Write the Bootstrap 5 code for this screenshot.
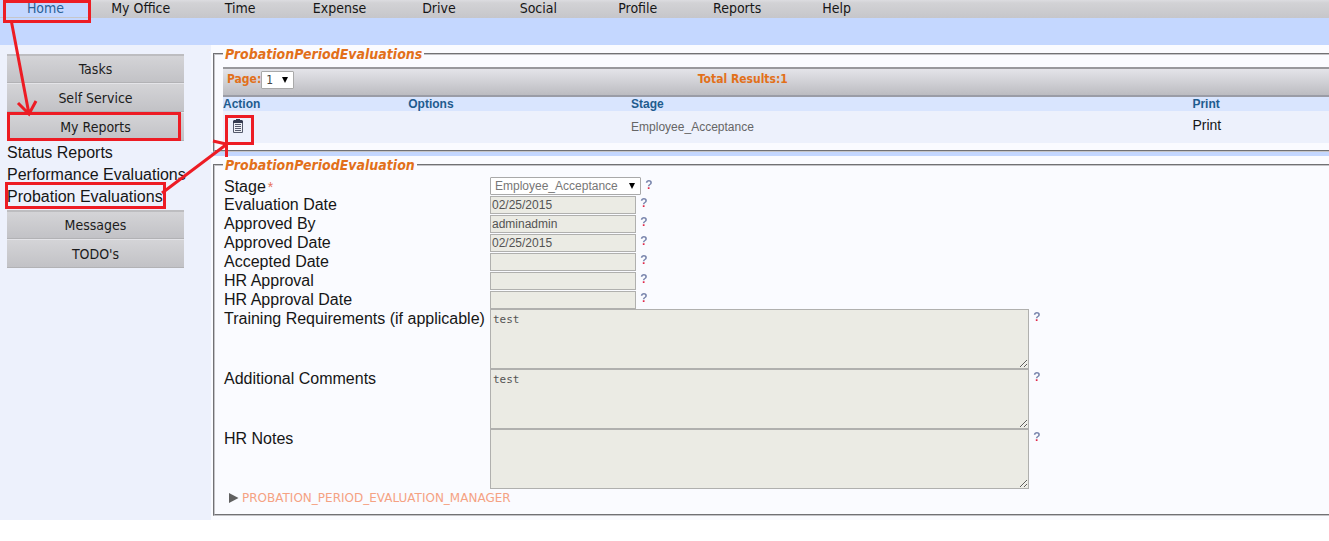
<!DOCTYPE html>
<html lang="en">
<head>
<meta charset="utf-8">
<meta name="viewport" content="width=device-width, initial-scale=1">
<title>Probation Evaluations</title>
<link href="https://cdn.jsdelivr.net/npm/bootstrap@5.3.0/dist/css/bootstrap.min.css" rel="stylesheet">
<style>
body{font-family:"Liberation Sans",Arial,sans-serif;font-size:16px;line-height:22px;color:#161616;background:#fff}
.ui-font{font-family:"DejaVu Sans Condensed",Tahoma,sans-serif}
a{color:inherit;text-decoration:none}
.topbar{height:18px;font-size:14px;line-height:17px;background:linear-gradient(#dcdce0 0,#d2d2d5 3px,#c6c6ca 18px)}
.topbar .nav-item{width:7.48%;text-align:center}
.topbar .nav-item:first-child{width:91px;background:#c4d7ff;color:#285f96}
.subband{height:27px;background:#c4d7ff}
.side{width:211px;background:#edf1fc;padding:9px 0 0 7px}
.side-btn{display:block;width:177px;height:29px;border:0;border-top:2px solid #bdbdc0;border-bottom:1px solid #b2b2b5;background:linear-gradient(#d4d4d7,#c2c2c6);font-size:14px;line-height:26px;padding:0;color:#1c1c1c}
.side-btn + .side-btn{border-top:1px solid #e4e4e8}
.side-links{padding:1px 0 2px}
.side-links a{white-space:nowrap}
.main-pane{background:#fafbff;min-width:0;padding:0 0 4px 2px}
fieldset.group{border:2px groove #c4c4c8;border-right:0;padding:4px 0 7px 8px}
fieldset.group.entry{padding-top:3px}
fieldset.group legend{float:none;width:auto;margin:0;padding:0 2px;font-size:14px;line-height:18px;font-weight:bold;font-style:italic;color:#e2701a}
.divider{height:4px;background:#c4d7ff;margin-left:-2px}
.pager{height:30px;border-top:2px solid #98989c;border-bottom:2px solid #9a9ca6;background:linear-gradient(#e4e4e9,#bcbcc1);font-size:12px;font-weight:bold;color:#e2701a;line-height:20px}
.pager > div{width:30%}
.pager > .total{width:34%}
.mini-select{appearance:none;height:18px;border:1px solid #a9a9a9;border-radius:1px;padding:0 4px;font-size:12px;line-height:16px;background:#fff url("data:image/svg+xml,%3Csvg xmlns='http://www.w3.org/2000/svg' width='6' height='6'%3E%3Cpath d='M0 0h6L3 6z'/%3E%3C/svg%3E") no-repeat right 5px center}
.page-select{width:33px;color:#444;margin-top:2px}
.stage-select{width:151px;color:#777}
.results{width:100%;table-layout:fixed;font-size:12px}
.results th{background:#d9e5fe;color:#1f5c8e;height:14px;line-height:14px;padding:0}
.results td{background:#edf1fc;height:32px;line-height:16px;padding:6px 0 0;vertical-align:top}
.results .stage-cell{color:#666;padding-top:8px}
.results .print-cell{font-size:14px}
.icon-btn{border:0;background:none;padding:2px 0 0 9px;display:block}
.form-area{padding-left:1px}
.f-row{height:19px;line-height:19px}
.f-first{height:18px}
.f-tall{height:60px}
.f-row > label{width:266px;flex:none;white-space:nowrap}
.req{color:#e8735a;font-size:14px;margin-left:2px}
.f-row input,.f-row textarea{background:#ebebe4;border:1px solid #b0b0ae;border-radius:0;color:#545454;font-size:12px;padding:0 1px}
.f-row input{width:146px;height:18px;line-height:16px;margin-top:1px}
.f-row textarea{width:539px;height:60px;font-family:"DejaVu Sans Mono",monospace;font-size:11px;line-height:14px;padding:3px 2px}
.hint{border:0;padding:0;margin-left:4px;width:8px;height:16px;font-family:"Liberation Sans",Arial,sans-serif;font-size:12px;line-height:16px;font-weight:bold;color:transparent;background:linear-gradient(#7783ab 0,#7783ab 10px,#e02848 10px);-webkit-background-clip:text;background-clip:text}
.manager{border:0;background:none;padding:0 0 0 5px;height:18px;font-family:"DejaVu Sans",Verdana,sans-serif;font-size:12px;line-height:18px;color:#f5a283}
.notes{position:absolute;left:0;top:0;pointer-events:none}
</style>
<script src="https://cdn.jsdelivr.net/npm/bootstrap@5.3.0/dist/js/bootstrap.bundle.min.js"></script>
</head>
<body class="position-relative">
<nav class="topbar ui-font">
  <ul class="list-unstyled d-flex m-0">
    <li class="nav-item"><a href="#">Home</a></li>
    <li class="nav-item"><a href="#">My Office</a></li>
    <li class="nav-item"><a href="#">Time</a></li>
    <li class="nav-item"><a href="#">Expense</a></li>
    <li class="nav-item"><a href="#">Drive</a></li>
    <li class="nav-item"><a href="#">Social</a></li>
    <li class="nav-item"><a href="#">Profile</a></li>
    <li class="nav-item"><a href="#">Reports</a></li>
    <li class="nav-item"><a href="#">Help</a></li>
  </ul>
</nav>
<div class="subband"></div>
<div class="d-flex">
  <aside class="side flex-shrink-0">
    <button type="button" class="side-btn ui-font">Tasks</button>
    <button type="button" class="side-btn ui-font">Self Service</button>
    <button type="button" class="side-btn ui-font">My Reports</button>
    <div class="side-links d-flex flex-column">
      <a href="#">Status Reports</a>
      <a href="#">Performance Evaluations</a>
      <a href="#">Probation Evaluations</a>
    </div>
    <button type="button" class="side-btn ui-font">Messages</button>
    <button type="button" class="side-btn ui-font">TODO's</button>
  </aside>
  <main class="main-pane flex-grow-1">
    <fieldset class="group">
      <legend class="ui-font">ProbationPeriodEvaluations</legend>
      <div class="pager ui-font d-flex align-items-start">
        <div class="d-flex align-items-start ps-1">
          <label for="page">Page:</label>
          <select id="page" class="mini-select page-select"><option>1</option></select>
        </div>
        <div class="total text-center">Total Results:1</div>
      </div>
      <table class="results">
        <colgroup><col style="width:16.75%"><col style="width:20.15%"><col style="width:50.75%"><col></colgroup>
        <thead><tr><th>Action</th><th>Options</th><th>Stage</th><th>Print</th></tr></thead>
        <tbody><tr>
          <td><button type="button" class="icon-btn" aria-label="Open evaluation">
            <svg width="12" height="14" viewBox="0 0 12 14" class="d-block"><path d="M1.500 2.500h9v11h-9z" fill="#eef0f6" stroke="#555a6c"/><path d="M4 0h4v1h2l1 1v2H1V2l1-1h2z" fill="#353b50"/><path d="M3 5.500h6M3 7.500h6M3 9.500h6M3 11.500h6" stroke="#555a6c"/></svg>
          </button></td>
          <td></td>
          <td class="stage-cell">Employee_Acceptance</td>
          <td class="print-cell"><a href="#">Print</a></td>
        </tr></tbody>
      </table>
    </fieldset>
    <div class="divider"></div>
    <fieldset class="group entry">
      <legend class="ui-font">ProbationPeriodEvaluation</legend>
      <form class="form-area">
        <div class="f-row f-first d-flex"><label for="stage">Stage<span class="req">*</span></label><select id="stage" class="mini-select stage-select"><option>Employee_Acceptance</option></select><button type="button" class="hint">?</button></div>
        <div class="f-row d-flex"><label for="evd">Evaluation Date</label><input id="evd" value="02/25/2015" readonly><button type="button" class="hint">?</button></div>
        <div class="f-row d-flex"><label for="apb">Approved By</label><input id="apb" value="adminadmin" readonly><button type="button" class="hint">?</button></div>
        <div class="f-row d-flex"><label for="apd">Approved Date</label><input id="apd" value="02/25/2015" readonly><button type="button" class="hint">?</button></div>
        <div class="f-row d-flex"><label for="acd">Accepted Date</label><input id="acd" readonly><button type="button" class="hint">?</button></div>
        <div class="f-row d-flex"><label for="hra">HR Approval</label><input id="hra" readonly><button type="button" class="hint">?</button></div>
        <div class="f-row d-flex"><label for="hrd">HR Approval Date</label><input id="hrd" readonly><button type="button" class="hint">?</button></div>
        <div class="f-row f-tall d-flex"><label for="trn">Training Requirements (if applicable)</label><textarea id="trn" readonly>test</textarea><button type="button" class="hint">?</button></div>
        <div class="f-row f-tall d-flex"><label for="cmt">Additional Comments</label><textarea id="cmt" readonly>test</textarea><button type="button" class="hint">?</button></div>
        <div class="f-row f-tall d-flex"><label for="nts">HR Notes</label><textarea id="nts" readonly></textarea><button type="button" class="hint">?</button></div>
        <button type="button" class="manager d-flex align-items-center"><svg width="13" height="10" viewBox="0 0 13 10"><path d="M0 0l9.500 5L0 10z" fill="#606060"/></svg>PROBATION_PERIOD_EVALUATION_MANAGER</button>
      </form>
    </fieldset>
  </main>
</div>
<!-- Walkthrough marks: Home, My Reports, Probation Evaluations, row action -->
<svg class="notes" width="260" height="215" viewBox="0 0 260 215" fill="none" stroke="#ed1c24" stroke-width="3" aria-hidden="true">
  <path d="M4.500 1.500h85v20h-85zM8.500 113.500h171v26h-171zM6.500 183.500h158v24h-158zM226.500 116.500h26v27h-26z"/>
  <path d="M11.500 22L29 114M18 103l11 11 7-13M162 193l65-49M213 141l13 3M226.500 143v14"/>
</svg>
</body>
</html>
